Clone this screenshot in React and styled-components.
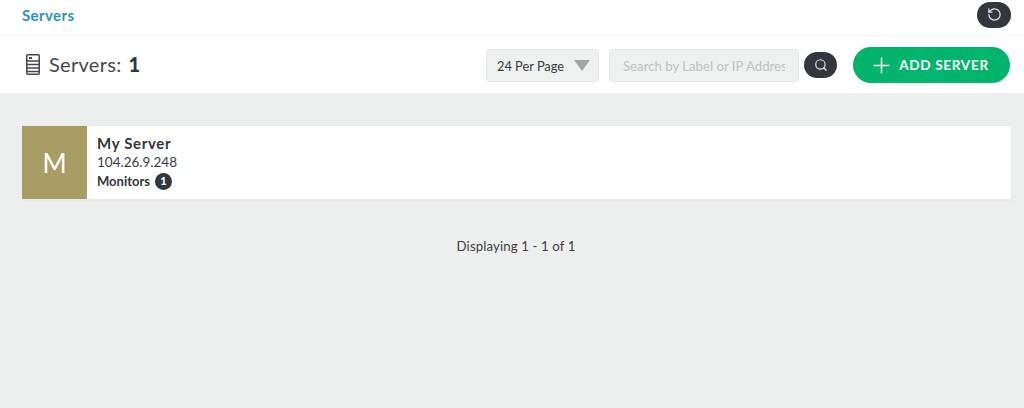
import React from 'react';
import styled, { createGlobalStyle } from 'styled-components';
import { Search, Plus, RotateCcw } from 'lucide-react';

const GlobalStyle = createGlobalStyle`
  html, body {
    margin: 0;
    height: 100%;
    background: #edefef;
  }
  body {
    font-family: "Lato", "Noto Sans", sans-serif;
    color: #33363d;
  }
  * { box-sizing: border-box; }
`;

const TopBar = styled.div`
  height: 36px;
  background: #fff;
  border-bottom: 1px solid #f3f4f4;
  display: flex;
  align-items: center;
  justify-content: space-between;
  padding: 0 13px 6px 22px;
`;

const Crumb = styled.a`
  color: #2a94bb;
  font-size: 15px;
  font-weight: 700;
  letter-spacing: 0.4px;
  margin-top: 1px;
`;

const RoundButton = styled.button`
  width: ${({ $w }) => $w}px;
  height: 26px;
  border: none;
  border-radius: 13px;
  background: #33363d;
  color: #e4e4e4;
  padding: 0;
  display: flex;
  align-items: center;
  justify-content: center;
`;

const Toolbar = styled.div`
  height: 57px;
  background: #fff;
  display: flex;
  align-items: center;
  padding: 1px 14px 0 26px;
`;

const Title = styled.h1`
  margin: 0 auto 2px 0;
  display: flex;
  align-items: center;
  gap: 9px;
  font-size: 20px;
  font-weight: 400;
  color: #45474d;
  letter-spacing: 0.3px;
  b {
    color: #33363d;
    font-weight: 900;
    margin-left: 7px;
  }
`;

const PerPage = styled.div`
  width: 113px;
  height: 33px;
  margin: 1px 10px 0 0;
  background: #eff0f0;
  border: 1px solid #e6e7e7;
  border-radius: 3px;
  display: flex;
  align-items: center;
  justify-content: space-between;
  padding: 0 8px 0 10px;
  font-size: 12.8px;
  color: #3a3c42;
`;

const Caret = styled.span`
  width: 0;
  height: 0;
  border-left: 8px solid transparent;
  border-right: 8px solid transparent;
  border-top: 11px solid #a3a5a6;
`;

const SearchInput = styled.input`
  width: 190px;
  height: 33px;
  margin: 1px 5px 0 0;
  background: #eff0f0;
  border: 1px solid #e6e7e7;
  border-radius: 3px;
  padding: 0 13px;
  font-family: inherit;
  font-size: 13.2px;
  &::placeholder { color: #c0c2c3; opacity: 1; }
`;

const AddButton = styled.button`
  width: 157px;
  height: 36px;
  margin-left: 16px;
  border: none;
  border-radius: 18px;
  background: #03b46c;
  color: #fff;
  font-family: inherit;
  font-size: 13.5px;
  font-weight: 700;
  letter-spacing: 0.7px;
  display: flex;
  align-items: center;
  justify-content: center;
  gap: 5px;
  padding: 0 5px 0 0;
`;

const Content = styled.main`
  padding: 32px 12px 0 22px;
`;

const Card = styled.div`
  height: 75px;
  background: #fff;
  border: 1px solid #e8eaea;
  border-left: none;
  box-shadow: 0 1px 0 #e8eaea;
  display: flex;
`;

const Avatar = styled.div`
  width: 65px;
  background: #a89e65;
  color: #fff;
  font-size: 26px;
  display: flex;
  align-items: center;
  justify-content: center;
`;

const Info = styled.div`
  padding: 7px 0 0 10px;
  display: flex;
  flex-direction: column;
`;

const Name = styled.div`
  font-size: 15px;
  font-weight: 700;
  letter-spacing: 0.65px;
  line-height: 20px;
`;

const Address = styled.div`
  font-size: 13.5px;
  line-height: 18px;
  color: #3c3e44;
`;

const Monitors = styled.div`
  font-size: 13px;
  font-weight: 700;
  line-height: 20px;
  display: flex;
  align-items: center;
  gap: 4px;
`;

const Badge = styled.span`
  width: 17px;
  height: 17px;
  margin-left: 1px;
  border-radius: 50%;
  background: #33363d;
  color: #fff;
  font-size: 11px;
  font-weight: 900;
  display: flex;
  align-items: center;
  justify-content: center;
`;

const Pagination = styled.div`
  margin-top: 38px;
  padding-right: 2px;
  text-align: center;
  font-size: 13.2px;
  letter-spacing: 0.12px;
  color: #3c3e44;
`;

const ServerIcon = () => (
  <svg width="14" height="21" viewBox="0 0 14 21" fill="none" stroke="#45474d">
    <rect x="0.75" y="0.75" width="12.5" height="19.5" rx="1" strokeWidth="1.5" />
    <path d="M1 7h12M1 10.5h12M1 14h12M1 17.5h12" strokeWidth="1.4" />
    <rect x="3" y="3" width="3" height="2" fill="#45474d" stroke="none" />
  </svg>
);

export default function App() {
  return (
    <>
      <GlobalStyle />
      <TopBar>
        <Crumb>Servers</Crumb>
        <RoundButton $w={34}>
          <RotateCcw size={15} strokeWidth={2} />
        </RoundButton>
      </TopBar>
      <Toolbar>
        <Title>
          <ServerIcon />
          <span>Servers:<b>1</b></span>
        </Title>
        <PerPage>
          24 Per Page
          <Caret />
        </PerPage>
        <SearchInput placeholder="Search by Label or IP Address" />
        <RoundButton $w={33}>
          <Search size={14} strokeWidth={2} />
        </RoundButton>
        <AddButton>
          <Plus size={25} strokeWidth={1.4} />
          ADD SERVER
        </AddButton>
      </Toolbar>
      <Content>
        <Card>
          <Avatar>M</Avatar>
          <Info>
            <Name>My Server</Name>
            <Address>104.26.9.248</Address>
            <Monitors>
              Monitors
              <Badge>1</Badge>
            </Monitors>
          </Info>
        </Card>
        <Pagination>Displaying 1 - 1 of 1</Pagination>
      </Content>
    </>
  );
}
